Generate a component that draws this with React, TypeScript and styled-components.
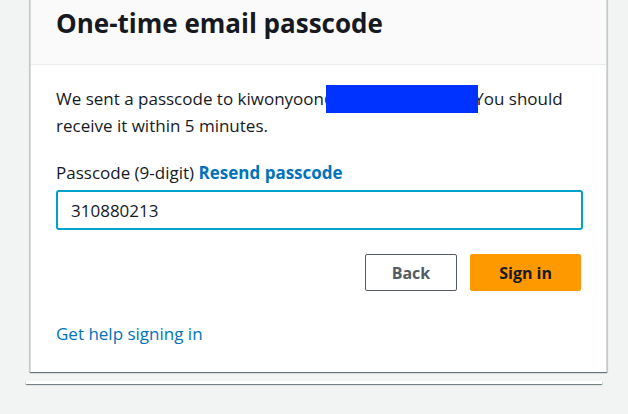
import React from "react";
import styled, { createGlobalStyle } from "styled-components";

const Global = createGlobalStyle`
  html, body { margin: 0; padding: 0; background: #f2f3f3; }
  body { font-family: "Open Sans", "Noto Sans", sans-serif; color: #16191f; overflow: hidden; }
`;

const Page = styled.div`
  width: 628px;
  height: 414px;
  overflow: hidden;
  display: flex;
  flex-direction: column;
  align-items: flex-start;
`;

const Card = styled.div`
  margin-top: -12px;
  margin-left: 30px;
  width: 577px;
  box-sizing: border-box;
  background: #ffffff;
  border: 1px solid #d5dbdb;
  border-top: none;
  border-bottom: none;
  box-shadow: 0 1px 1px 0 rgba(0, 28, 36, 0.45), 1px 1px 1px 0 rgba(0, 28, 36, 0.12), -1px 1px 1px 0 rgba(0, 28, 36, 0.12);
  display: flex;
  flex-direction: column;
`;

const Header = styled.div`
  background: #fafafa;
  border-bottom: 1px solid #eaeded;
  padding: 12px 25px 18px 25px;
`;

const Title = styled.h1`
  margin: 0;
  font-size: 26px;
  line-height: 46px;
  font-weight: 700;
  color: #16191f;
`;

const Body = styled.div`
  padding: 20px 25px 25px 25px;
  display: flex;
  flex-direction: column;
`;

const Text = styled.p`
  margin: 0;
  font-size: 17px;
  line-height: 26px;
`;

const Redact = styled.span`
  display: inline-block;
  width: 152px;
  height: 28px;
  background: #0033ff;
  vertical-align: -8px;
  margin-left: -13px;
  margin-right: -4px;
  position: relative;
`;

const Label = styled.div`
  margin-top: 21px;
  font-size: 17px;
  line-height: 26px;
`;

const Link = styled.a<{ $bold?: boolean }>`
  color: #0073bb;
  font-weight: ${(p) => (p.$bold ? 700 : 400)};
  text-decoration: none;
  cursor: pointer;
`;

const Input = styled.input`
  margin-top: 4px;
  box-sizing: border-box;
  width: 527px;
  height: 40px;
  border: 2px solid #00a1c9;
  border-radius: 3px;
  padding: 0 13px;
  font-family: inherit;
  font-size: 17px;
  color: #16191f;
  outline: none;
  background: #fff;
`;

const Actions = styled.div`
  margin-top: 24px;
  display: flex;
  justify-content: flex-end;
  gap: 13px;
`;

const Button = styled.button<{ $primary?: boolean }>`
  box-sizing: border-box;
  height: 37px;
  padding: 0 ${(p) => (p.$primary ? "28px" : "26px")};
  border-radius: 2px;
  font-family: inherit;
  font-size: 16px;
  font-weight: 700;
  cursor: pointer;
  border: 1px solid ${(p) => (p.$primary ? "#ff9900" : "#545b64")};
  background: ${(p) => (p.$primary ? "#ff9900" : "#ffffff")};
  color: ${(p) => (p.$primary ? "#16191f" : "#545b64")};
`;

const Help = styled.div`
  margin-top: 30px;
  font-size: 17px;
  line-height: 26px;
`;

const Strip = styled.div`
  margin-top: 9px;
  margin-left: 26px;
  width: 576px;
  height: 3px;
  background: #ffffff;
  box-shadow: 0 1px 1px 0 rgba(0, 28, 36, 0.45), 1px 1px 1px 0 rgba(0, 28, 36, 0.12), -1px 1px 1px 0 rgba(0, 28, 36, 0.12);
`;

export default function App() {
  return (
    <>
      <Global />
      <Page>
        <Card>
          <Header>
            <Title>One-time email passcode</Title>
          </Header>
          <Body>
            <Text>
              We sent a passcode to kiwonyoon@<Redact />You should receive it within 5 minutes.
            </Text>
            <Label>
              Passcode (9-digit) <Link $bold>Resend passcode</Link>
            </Label>
            <Input defaultValue="310880213" />
            <Actions>
              <Button>Back</Button>
              <Button $primary>Sign in</Button>
            </Actions>
            <Help>
              <Link>Get help signing in</Link>
            </Help>
          </Body>
        </Card>
        <Strip />
      </Page>
    </>
  );
}
